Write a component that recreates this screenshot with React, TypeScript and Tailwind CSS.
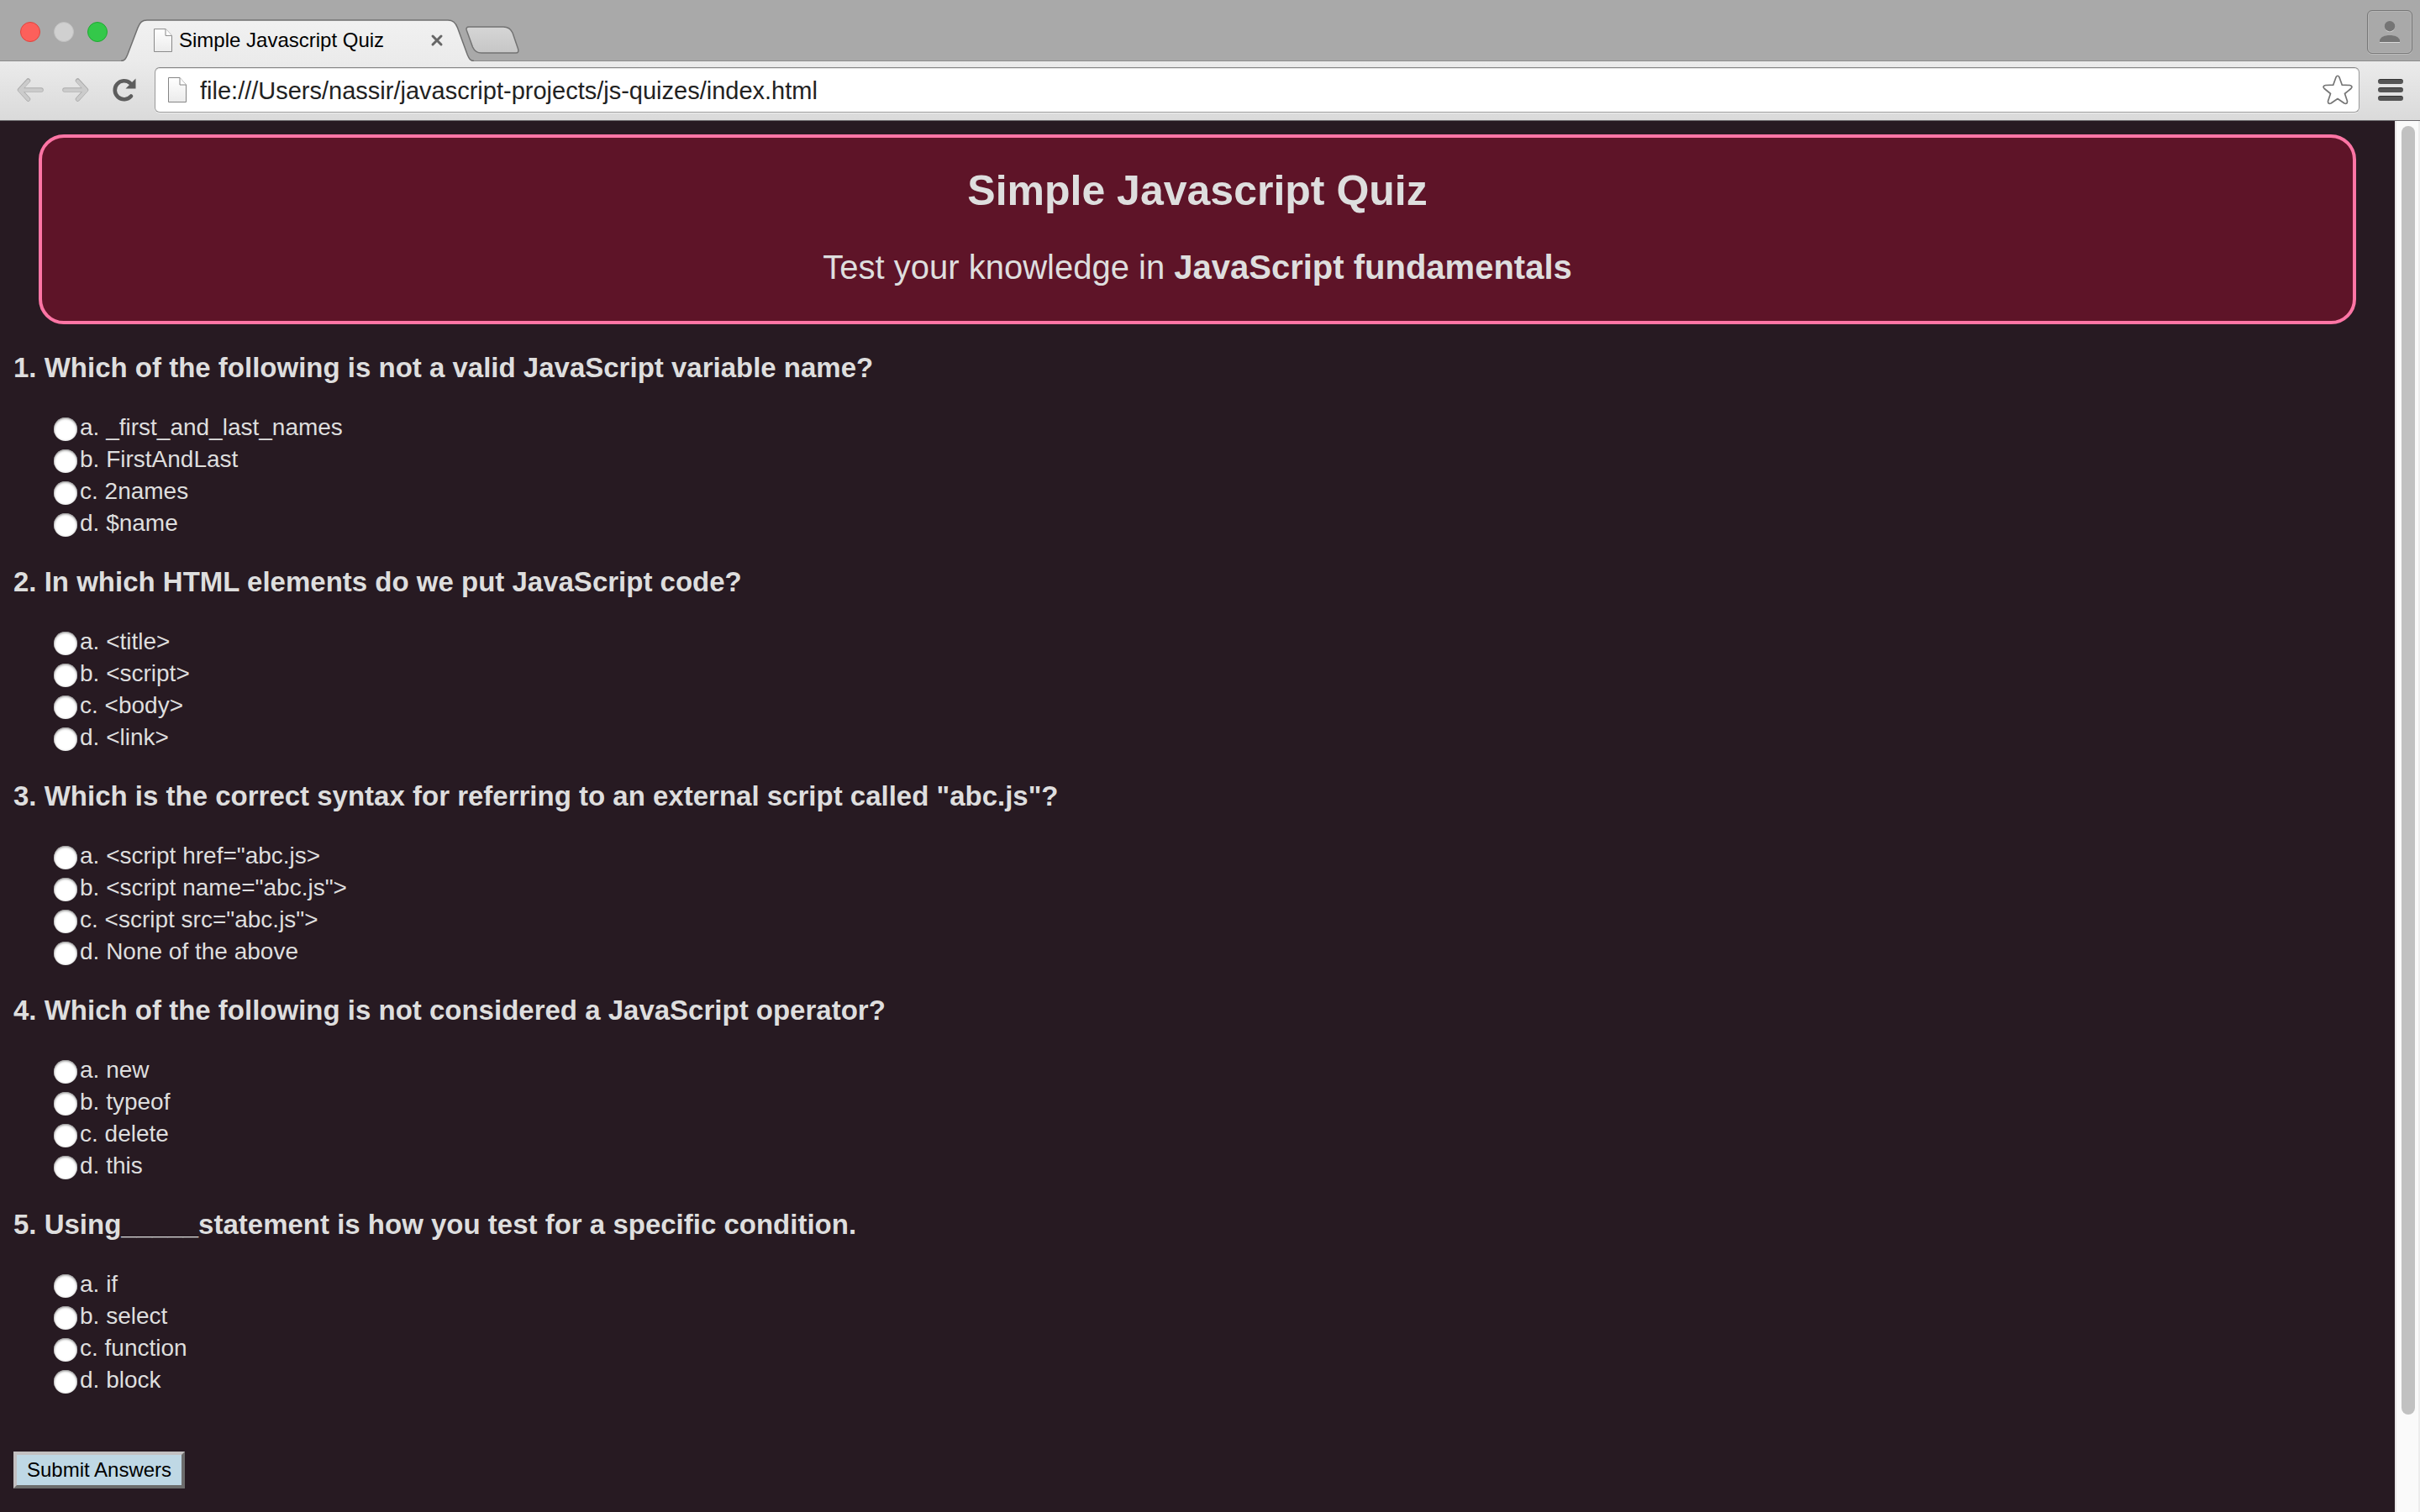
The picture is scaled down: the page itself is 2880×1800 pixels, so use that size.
import React from "react";

const questions = [
  {
    text: "1. Which of the following is not a valid JavaScript variable name?",
    options: ["a. _first_and_last_names", "b. FirstAndLast", "c. 2names", "d. $name"],
  },
  {
    text: "2. In which HTML elements do we put JavaScript code?",
    options: ["a. <title>", "b. <script>", "c. <body>", "d. <link>"],
  },
  {
    text: '3. Which is the correct syntax for referring to an external script called "abc.js"?',
    options: ['a. <script href="abc.js>', 'b. <script name="abc.js">', 'c. <script src="abc.js">', "d. None of the above"],
  },
  {
    text: "4. Which of the following is not considered a JavaScript operator?",
    options: ["a. new", "b. typeof", "c. delete", "d. this"],
  },
  {
    text: "5. Using_____statement is how you test for a specific condition.",
    options: ["a. if", "b. select", "c. function", "d. block"],
  },
];

function PageIcon({ className }: { className: string }) {
  return (
    <svg viewBox="0 0 22 30" preserveAspectRatio="none" className={className} aria-hidden="true">
      <defs>
        <linearGradient id="page-fill" x1="0" y1="0" x2="0" y2="1">
          <stop offset="0" stopColor="#ffffff" />
          <stop offset="1" stopColor="#ebebeb" />
        </linearGradient>
      </defs>
      <path d="M0.5 0.5H14L21.5 9V29.5H0.5Z" fill="url(#page-fill)" stroke="#858585" />
      <path d="M14 0.5V9H21.5" fill="#fff" stroke="#858585" />
    </svg>
  );
}

function Arrow({ className }: { className: string }) {
  return (
    <svg viewBox="0 0 32 30" className={className} aria-hidden="true">
      <g fill="none" strokeLinecap="round" strokeLinejoin="round">
        <path d="M13.500 4L3.500 15L13.500 26M4 15H29" stroke="#ababab" strokeWidth="5.500" />
        <path d="M13.500 4.500L3.500 15.300L13.500 26M4 15.300H29" stroke="#cbcbcb" strokeWidth="4" />
      </g>
    </svg>
  );
}

function TabStrip() {
  return (
    <div className="flex h-[73px] items-end border-b border-[#8b8b8b] bg-[#a9a9a9] pl-6">
      <div className="mb-[22px] flex gap-4">
        <button aria-label="Close window" className="size-6 rounded-full border border-[#e0443e] bg-[#fc605b]" />
        <button aria-label="Minimize window" className="size-6 rounded-full border border-[#c0c0c0] bg-[#d0d0d0]" />
        <button aria-label="Zoom window" className="size-6 rounded-full border border-[#1faa32] bg-[#34c84a]" />
      </div>
      <div className="relative -mb-px ml-4 flex h-[50px] w-[420px] items-center pr-9 pl-[39px]">
        <svg viewBox="0 0 420 50" className="absolute inset-0 size-full" aria-hidden="true">
          <defs>
            <linearGradient id="tab-fill" x1="0" y1="0" x2="0" y2="1">
              <stop offset="0" stopColor="#f1f1f1" />
              <stop offset="1" stopColor="#ebebeb" />
            </linearGradient>
          </defs>
          <path
            d="M0 49.500C5 49.500 6 46 8 41.500L20 10C22.500 3.500 25 1 31 1H389C395 1 398 3.500 400.500 10L412 41.500C414 46 415 49.500 420 49.500V50H0Z"
            fill="url(#tab-fill)"
          />
          <path
            d="M0 49.500C5 49.500 6 46 8 41.500L20 10C22.500 3.500 25 1 31 1H389C395 1 398 3.500 400.500 10L412 41.500C414 46 415 49.500 420 49.500"
            fill="none"
            stroke="#707070"
            strokeWidth="1.500"
          />
        </svg>
        <PageIcon className="relative h-[28px] w-[22px]" />
        <span className="relative ml-2 flex-1 text-[24px] leading-7 whitespace-nowrap text-black">
          Simple Javascript Quiz
        </span>
        <button aria-label="Close tab" className="relative">
          <svg viewBox="0 0 16 16" className="size-4" aria-hidden="true">
            <path d="M3 3L13 13M13 3L3 13" stroke="#666" strokeWidth="3" strokeLinecap="round" />
          </svg>
        </button>
      </div>
      <button aria-label="New tab" className="-ml-2.5 mb-[7px]">
        <svg viewBox="0 0 66 34" className="block h-[34px] w-[66px]" aria-hidden="true">
          <defs>
            <linearGradient id="new-tab-fill" x1="0" y1="0" x2="0" y2="1">
              <stop offset="0" stopColor="#d6d6d6" />
              <stop offset="1" stopColor="#c6c6c6" />
            </linearGradient>
          </defs>
          <path
            d="M4 1H45C51 1 54 3.500 56 8L62.500 27C63.500 30.500 62.500 32 60 32H19C13.500 32 10.500 29.500 8.500 25L1.300 5C0.500 2.500 1.500 1 4 1Z"
            fill="url(#new-tab-fill)"
            stroke="#737373"
            strokeWidth="1.500"
          />
        </svg>
      </button>
      <button
        aria-label="Profile"
        className="mr-[9px] mb-2 ml-auto flex h-[52px] w-[54px] items-center justify-center rounded-md border border-[#777] shadow-[inset_0_0_0_1px_#b5b5b5,0_1px_0_#bcbcbc]"
      >
        <svg viewBox="0 0 24 26" className="h-[26px] w-6" aria-hidden="true">
          <path d="M0 25.500H24" stroke="#d8d8d8" strokeWidth="1" />
          <circle cx="12" cy="7" r="6.200" fill="#d0d0d0" />
          <circle cx="12" cy="6.200" r="6.200" fill="#757575" />
          <path d="M0 25V23C1 19 6 17 12 17S23 19 24 23V25Z" fill="#757575" />
        </svg>
      </button>
    </div>
  );
}

function Toolbar() {
  return (
    <div className="flex h-[71px] items-start border-b border-[#6c6a6d] bg-gradient-to-b from-[#ebebeb] to-[#dadada] pt-[7px] pr-5 pl-5">
      <div className="flex h-[54px] items-center">
        <button aria-label="Back">
          <Arrow className="block h-[30px] w-8" />
        </button>
        <button aria-label="Forward" className="ml-[22px]">
          <Arrow className="block h-[30px] w-8 -scale-x-100" />
        </button>
        <button aria-label="Reload" className="mr-[22px] ml-7">
          <svg viewBox="0 0 28 28" className="block size-7" aria-hidden="true">
            <path d="M22 21.500A11 11 0 1 1 21 6" fill="none" stroke="#5d5d5d" strokeWidth="4.600" strokeLinecap="round" />
            <path d="M27.500 0.500V12.500H15.500Z" fill="#5d5d5d" />
          </svg>
        </button>
      </div>
      <div className="flex h-[54px] flex-1 items-center rounded-md border border-[#9a9a9a] border-t-[#858585] bg-white pr-[7px] pl-[15px] shadow-[inset_0_1px_1px_#e4e4e4,0_1px_0_#efefef]">
        <PageIcon className="h-[30px] w-[22px]" />
        <input
          aria-label="Address"
          defaultValue="file:///Users/nassir/javascript-projects/js-quizes/index.html"
          className="ml-4 h-10 min-w-0 flex-1 bg-transparent pt-[3px] text-[29px] text-[#222] outline-none"
        />
        <button aria-label="Bookmark this page">
          <svg viewBox="0 0 36 36" className="block size-9" aria-hidden="true">
            <path
              d="M16 3Q18 -0.500 20 3L23.300 12.200L32.500 12.500Q36.500 13.500 33.800 16.500L26.500 22.500L29.500 31.500Q29.500 35.500 26 34L18 28.500L10 34Q6.500 35.500 6.500 31.500L9.500 22.500L2.200 16.500Q-0.500 13.500 3.500 12.500L12.700 12.200Z"
              fill="#fff"
              stroke="#757575"
              strokeWidth="1.700"
              strokeLinejoin="round"
            />
          </svg>
        </button>
      </div>
      <button aria-label="Menu" className="mt-[14px] ml-[22px] flex flex-col gap-1">
        <span className="h-1.5 w-[30px] rounded-full border-t border-[#333] bg-[#555]" />
        <span className="h-1.5 w-[30px] rounded-full border-t border-[#333] bg-[#555]" />
        <span className="h-1.5 w-[30px] rounded-full border-t border-[#333] bg-[#555]" />
      </button>
    </div>
  );
}

export default function App() {
  return (
    <div className="flex min-h-screen flex-col font-['Liberation_Sans',Arial,sans-serif]">
      <TabStrip />
      <Toolbar />
      <div className="flex flex-1 bg-[#271a22]">
        <main className="flex-1 px-4 pt-4 pb-7 text-[#dedede]">
          <header className="mx-[30px] rounded-[30px] border-4 border-[#ff75a5] bg-[#5e1428] pt-[34px] pb-[41px] text-center">
            <h1 className="text-[50px] leading-[58px] font-bold">Simple Javascript Quiz</h1>
            <p className="mt-[39px] text-[40px] leading-[46px]">
              Test your knowledge in <strong>JavaScript fundamentals</strong>
            </p>
          </header>
          <form className="mt-[33px]" onSubmit={(e) => e.preventDefault()}>
            <div className="flex flex-col gap-8">
              {questions.map((q, i) => (
                <section key={q.text} role="radiogroup" aria-labelledby={`question-${i}`}>
                  <h3 id={`question-${i}`} className="text-[33px] leading-[38px] font-bold">
                    {q.text}
                  </h3>
                  <div className="mt-[33px] ml-12">
                    {q.options.map((option) => (
                      <label key={option} className="flex w-fit items-center gap-[3px] text-[28px] leading-[38px]">
                        <input
                          type="radio"
                          name={`q${i}`}
                          value={option[0]}
                          className="mt-[3px] size-7 appearance-none rounded-full bg-white shadow-[inset_0_1px_3px_#777] checked:border-8 checked:border-white checked:bg-black"
                        />
                        {option}
                      </label>
                    ))}
                  </div>
                </section>
              ))}
            </div>
            <button
              type="submit"
              className="mt-[66px] block border-4 border-t-[#c3c0c1] border-r-[#6c6c6c] border-b-[#6c6c6c] border-l-[#c3c0c1] bg-[#bfd8e5] px-3 text-[24px] leading-9 text-black"
            >
              Submit Answers
            </button>
          </form>
        </main>
        <div className="flex w-[30px] flex-col border-r-2 border-l-2 border-r-[#ededed] border-l-[#e8e6e7] bg-[#fafafa] pt-1.5 pb-[116px] pl-1.5">
          <div className="w-4 flex-1 rounded-full bg-[#c1c1c1]" />
        </div>
      </div>
    </div>
  );
}
